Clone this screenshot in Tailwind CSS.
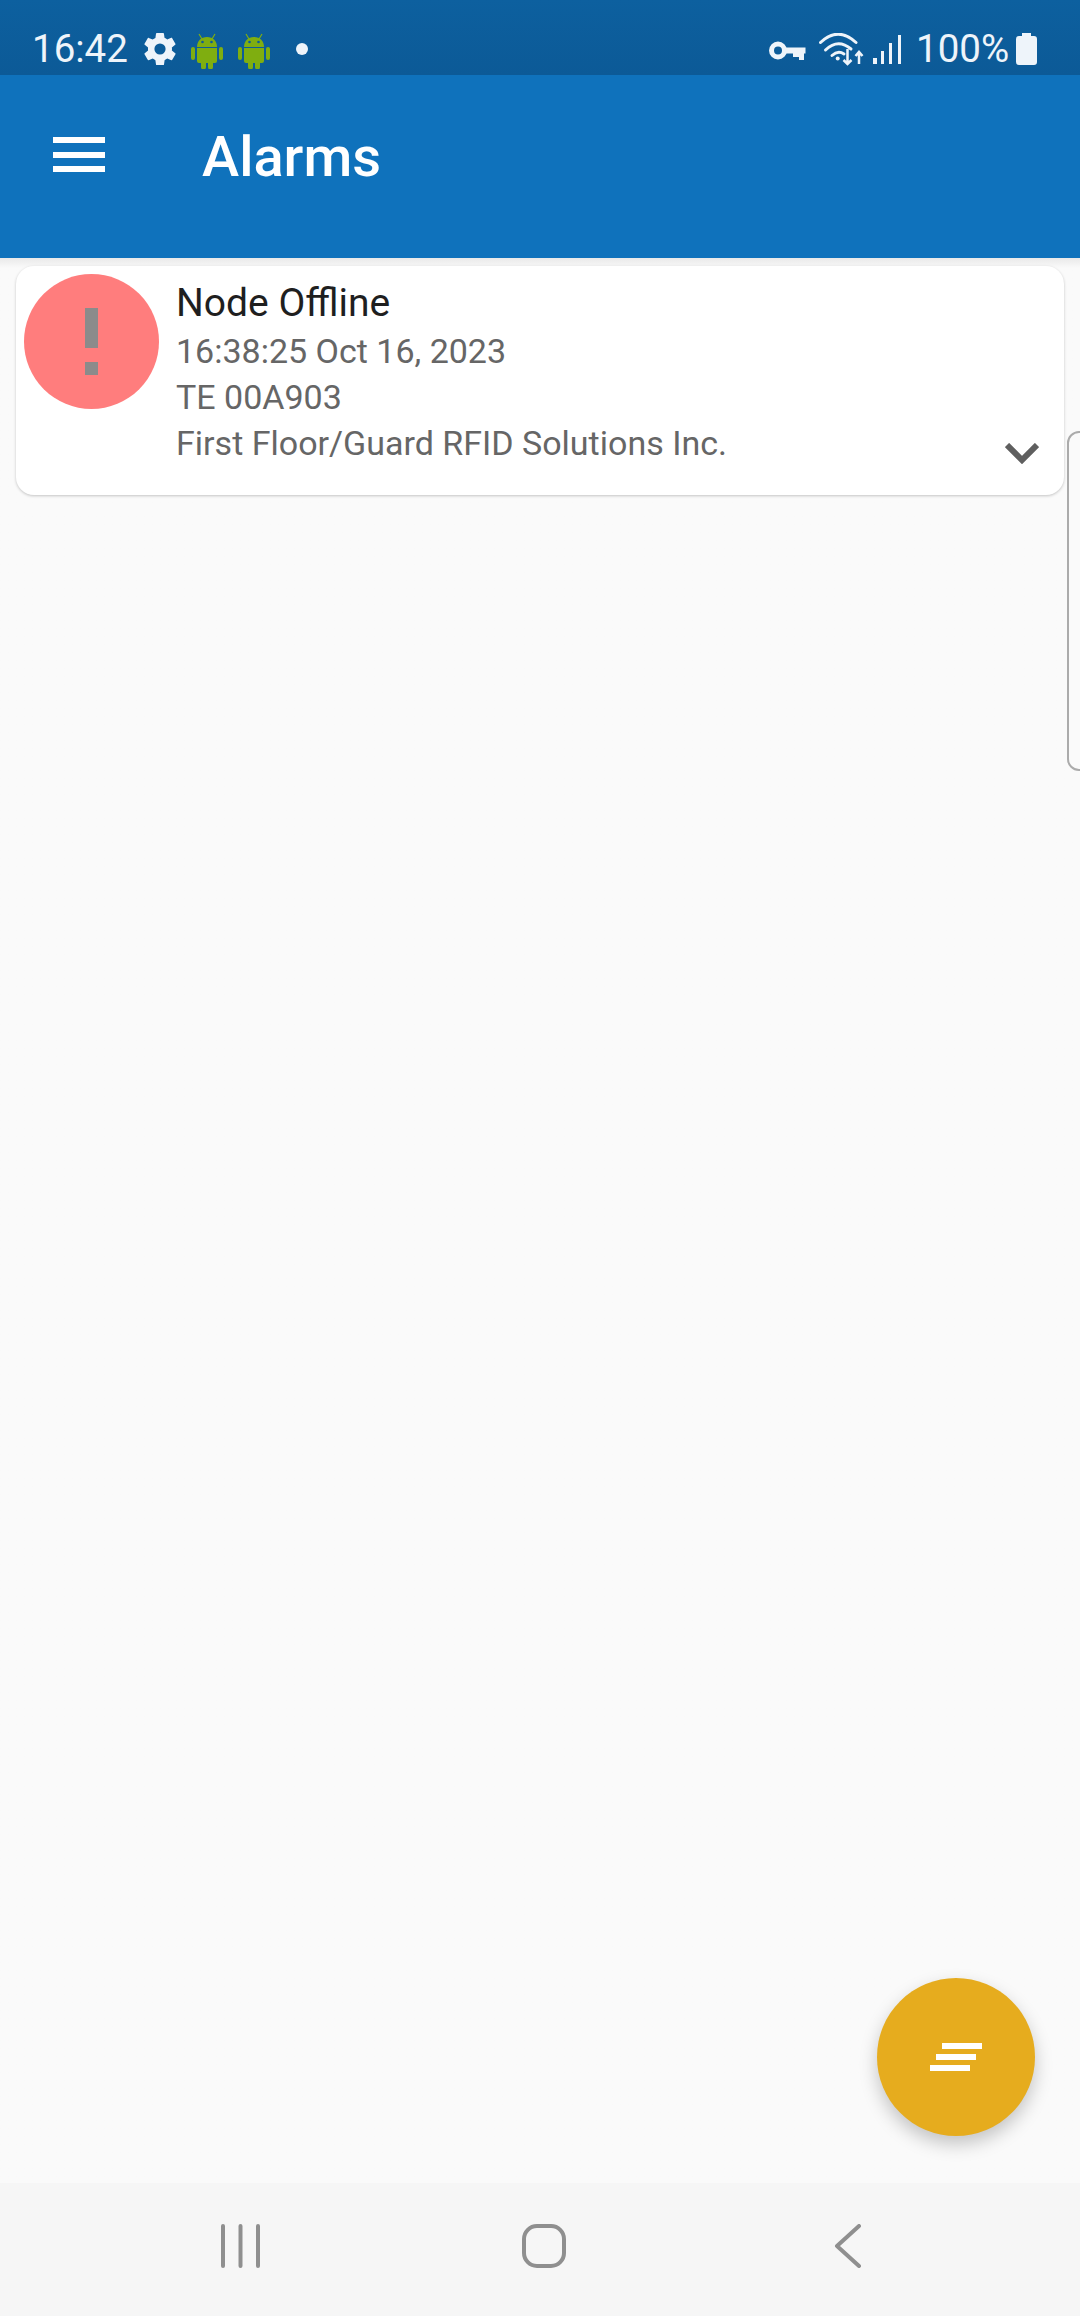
<!DOCTYPE html>
<html lang="en">
<head>
  <meta charset="UTF-8" />
  <meta name="viewport" content="width=device-width, initial-scale=1.0"/>
  <title>Alarms</title>
  <script src="https://cdn.jsdelivr.net/npm/@tailwindcss/browser@4"></script>
</head>
<body class="bg-[#fafafa] font-['Roboto',sans-serif] overflow-hidden">
<div class="flex flex-col w-[1080px] h-[2316px]">

  <!-- status bar -->
  <div class="h-[75px] shrink-0 bg-gradient-to-b from-[#0d609f] to-[#0c5a97] text-[#eef4fa] flex items-start pl-[32px] pr-[43px]">
    <span class="w-[95px] whitespace-nowrap text-[38.5px] leading-[44px] mt-[27px]">16:42</span>
    <svg class="ml-[17px] mt-[33px]" width="32" height="32" viewBox="2 2 20 20" fill="#eef4fa"><path fill-rule="evenodd" d="M19.4 13c.04-.32.1-.66.1-1s-.05-.68-.1-1l2.1-1.65c.2-.15.25-.42.12-.65l-2-3.46c-.12-.22-.4-.3-.6-.22l-2.5 1c-.52-.4-1.08-.73-1.7-.98l-.37-2.65A.5.5 0 0 0 14 2h-4a.5.5 0 0 0-.5.42l-.37 2.65c-.62.25-1.18.59-1.7.98l-2.5-1c-.22-.08-.48 0-.6.22l-2 3.46c-.13.22-.07.5.12.65L4.55 11c-.04.32-.07.66-.07 1s.03.68.07 1l-2.1 1.65c-.2.15-.25.42-.12.65l2 3.46c.12.22.4.3.6.22l2.5-1c.52.4 1.08.73 1.7.98l.37 2.65c.04.24.25.42.5.42h4c.25 0 .46-.18.5-.42l.37-2.65c.62-.25 1.18-.59 1.7-.98l2.5 1c.22.08.48 0 .6-.22l2-3.46c.13-.22.07-.5-.12-.65zM12 15.5a3.5 3.5 0 1 1 0-7 3.5 3.5 0 0 1 0 7z"/></svg>
    <svg class="ml-[15px] mt-[32px]" width="32" height="37" viewBox="0 0 32 37" fill="#7fae10"><path d="M8 2l3 5M24 2l-3 5" stroke="#7fae10" stroke-width="1.2"/><path d="M6 15c0-6 4-10 10-10s10 4 10 10z"/><circle cx="11.500" cy="10" r="1.300" fill="#0c5c9a"/><circle cx="20.500" cy="10" r="1.300" fill="#0c5c9a"/><path d="M6 16h20v13a2 2 0 0 1-2 2h-2v4a2.500 2.500 0 0 1-5 0v-4h-2v4a2.500 2.500 0 0 1-5 0v-4H8a2 2 0 0 1-2-2z"/><rect x="0" y="15" width="4" height="13" rx="2"/><rect x="28" y="15" width="4" height="13" rx="2"/></svg>
    <svg class="ml-[15px] mt-[32px]" width="32" height="37" viewBox="0 0 32 37" fill="#7fae10"><path d="M8 2l3 5M24 2l-3 5" stroke="#7fae10" stroke-width="1.2"/><path d="M6 15c0-6 4-10 10-10s10 4 10 10z"/><circle cx="11.500" cy="10" r="1.300" fill="#0c5c9a"/><circle cx="20.500" cy="10" r="1.300" fill="#0c5c9a"/><path d="M6 16h20v13a2 2 0 0 1-2 2h-2v4a2.500 2.500 0 0 1-5 0v-4h-2v4a2.500 2.500 0 0 1-5 0v-4H8a2 2 0 0 1-2-2z"/><rect x="0" y="15" width="4" height="13" rx="2"/><rect x="28" y="15" width="4" height="13" rx="2"/></svg>
    <span class="ml-[26px] mt-[43px] w-[12px] h-[12px] rounded-full bg-[#eef4fa]"></span>

    <div class="ml-auto flex items-start">
      <svg class="mt-[40px]" width="37" height="22" viewBox="0 0 37 22" fill="none" stroke="#eef4fa" stroke-width="5"><circle cx="9" cy="10.500" r="6.500"/><path d="M16 7.500h20.500v6H16z" fill="#eef4fa" stroke="none"/><path d="M24 13h11v7h-5v-3h-6z" fill="#eef4fa" stroke="none"/></svg>
      <svg class="ml-[13px] mt-[33px]" width="46" height="33" viewBox="0 0 46 33" fill="none" stroke="#eef4fa" stroke-width="3" stroke-linecap="round"><path d="M1.500 9.500Q19-7 37 9.500"/><path d="M6.500 17Q19 5 32 16"/><path d="M13 22.500Q19 17 25 21"/><circle cx="18.700" cy="25.500" r="2" fill="#eef4fa" stroke="none"/><path stroke-width="2.500" stroke-linecap="butt" d="M28.500 16v15M24.500 27l4 4 4-4M40 31V19M36.500 23l3.500-4 3.500 4"/></svg>
      <svg class="ml-[8px] mt-[35px]" width="29" height="29" viewBox="0 0 29 29" fill="#eef4fa"><rect x="0" y="23" width="4" height="6"/><rect x="8" y="16" width="3" height="13"/><rect x="16" y="8" width="3" height="21"/><rect x="25" y="0" width="3" height="29"/></svg>
      <span class="ml-[14px] w-[92px] whitespace-nowrap text-[38.5px] leading-[44px] mt-[27px]">100%</span>
      <svg class="ml-[8px] mt-[33px]" width="21" height="32" viewBox="0 0 21 32" fill="#eef4fa"><path d="M6 0h9v3h3a3 3 0 0 1 3 3v23a3 3 0 0 1-3 3H3a3 3 0 0 1-3-3V6a3 3 0 0 1 3-3h3z"/></svg>
    </div>
  </div>

  <!-- app bar -->
  <div class="h-[183px] shrink-0 bg-[#0f72bc] flex items-start">
    <div class="ml-[53px] mt-[62px] w-[52px] flex flex-col gap-[8.500px]">
      <span class="h-[6px] bg-white"></span>
      <span class="h-[6px] bg-white"></span>
      <span class="h-[6px] bg-white"></span>
    </div>
    <h1 class="ml-[97px] mt-[52px] text-[56px] leading-[60px] font-medium text-white">Alarms</h1>
  </div>

  <!-- alarm list -->
  <div class="relative flex-1 bg-[#fafafa] bg-gradient-to-b from-[#e9e9e9] from-0% to-[#fafafa] to-[10px] px-[16px] pt-[8px]">
    <div class="relative h-[229px] w-[1048px] bg-white rounded-[18px] shadow-[0_1px_3px_rgba(0,0,0,0.22)] flex items-start pl-[8px] pt-[8px]">
      <div class="w-[135px] h-[135px] rounded-full bg-[#ff7d7d] shrink-0 flex flex-col items-center pt-[34px]">
        <span class="w-[13px] h-[40px] bg-[#8b8b8b]"></span>
        <span class="w-[13px] h-[13px] bg-[#8b8b8b] mt-[14px]"></span>
      </div>
      <div class="ml-[17px]">
        <p class="text-[39px] leading-[48px] text-[#1f1f1f] mt-[5px]">Node Offline</p>
        <p class="text-[34px] leading-[46px] text-[#666666] mt-[1px]">16:38:25 Oct 16, 2023</p>
        <p class="text-[34px] leading-[46px] text-[#666666]">TE 00A903</p>
        <p class="text-[34px] leading-[46px] text-[#666666]">First Floor/Guard RFID Solutions Inc.</p>
      </div>
      <svg class="absolute right-[25px] bottom-[31px]" width="34" height="21" viewBox="0 0 34 21" fill="none" stroke="#5f5f5f" stroke-width="6"><path d="M2 2l15 15L32 2"/></svg>
    </div>

    <!-- next page peeking in from the right -->
    <div class="absolute left-[1067px] top-[173px] w-[40px] h-[340px] rounded-[12px] border-2 border-[#ababab] bg-[#fafafa]"></div>

    <!-- floating button -->
    <button class="absolute left-[877px] top-[1720px] w-[158px] h-[158px] rounded-full bg-[#e6ac1e] shadow-[0_8px_18px_rgba(0,0,0,0.22)] flex flex-col items-center justify-center gap-[5px]">
      <span class="w-[40px] h-[6px] bg-white translate-x-[6px]"></span>
      <span class="w-[40px] h-[6px] bg-white"></span>
      <span class="w-[40px] h-[6px] bg-white -translate-x-[6px]"></span>
    </button>
  </div>

  <!-- navigation bar -->
  <div class="h-[133px] shrink-0 bg-[#f6f6f6] flex items-start">
    <svg class="ml-[220px] mt-[41px]" width="42" height="44" viewBox="0 0 42 44" stroke="#8f8f8f" stroke-width="4" stroke-linecap="round"><path d="M3 2v40M20.500 2v40M38 2v40"/></svg>
    <svg class="ml-[260px] mt-[41px]" width="44" height="44" viewBox="0 0 44 44" fill="none" stroke="#8f8f8f" stroke-width="4"><rect x="2" y="2" width="40" height="40" rx="13"/></svg>
    <svg class="ml-[268px] mt-[41px]" width="28" height="44" viewBox="0 0 28 44" fill="none" stroke="#8f8f8f" stroke-width="4" stroke-linecap="round" stroke-linejoin="round"><path d="M25 2L3 22l22 20"/></svg>
  </div>

</div>
</body>
</html>
